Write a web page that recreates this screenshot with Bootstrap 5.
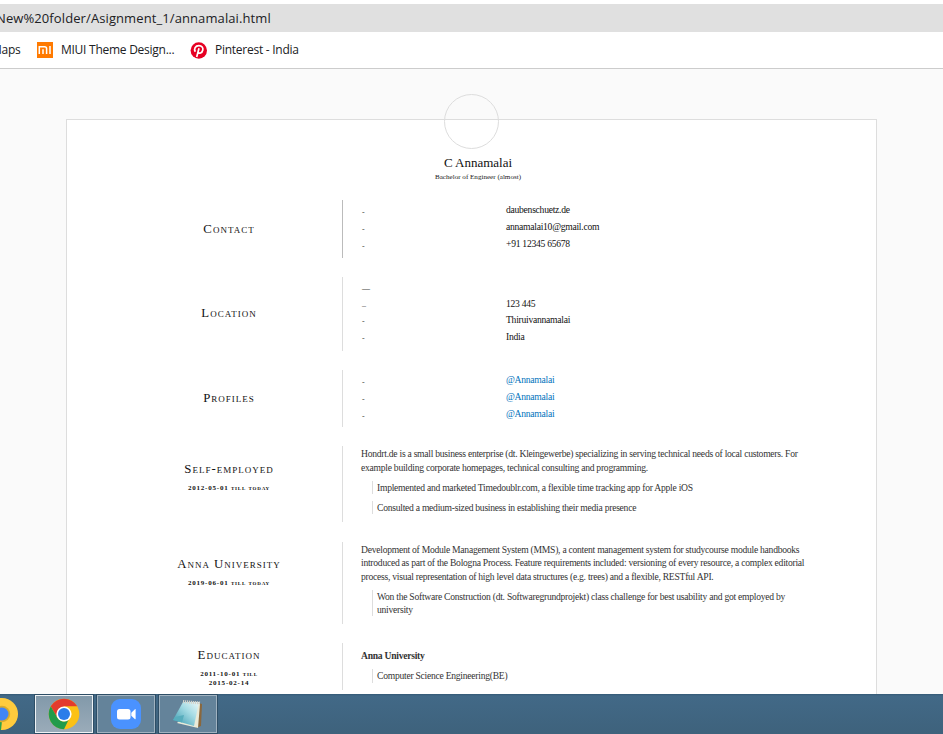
<!DOCTYPE html>
<html lang="en">
<head>
<meta charset="utf-8">
<meta name="viewport" content="width=device-width, initial-scale=1">
<title>C Annamalai</title>
<link href="https://cdn.jsdelivr.net/npm/bootstrap@5.3.0/dist/css/bootstrap.min.css" rel="stylesheet">
<style>
  body { width: 943px; height: 734px; background: #fafafa; font-family: "Liberation Serif", serif; color: #333; }
  .chrome-ui { font-family: "Open Sans", "Noto Sans", sans-serif; color: #202124; line-height: 20px; white-space: nowrap; }
  .address { height: 28px; margin-top: 4px; background: #e0e0e0; font-size: 13px; }
  .bookmarks { height: 37px; background: #fff; border-bottom: 1px solid #ccc; font-size: 12px; }
  .address span { margin-left: -4px; letter-spacing: .1px; }
  .bm-maps { width: 36px; }
  .bm-maps span { margin-left: -9px; }
  .bm-miui { width: 154px; }
  .bookmarks span { letter-spacing: -.26px; }
  .browser { height: 694px; }
  .page-area { background: #fafafa; }
  .sheet { width: 811px; height: 600px; margin: 50px 0 0 66px; background: #fff; border: 1px solid #ddd; }
  .portrait { width: 55px; height: 55px; border: 1px solid #ddd; margin: -26px 0 0 377px; }
  .person { font-size: 13px; line-height: 16px; color: #111; padding-left: 13px; margin-top: 6px; }
  .degree { font-size: 7.1px; line-height: 10px; color: #222; padding-left: 13px; margin-top: 1px; margin-bottom: 18px; }
  .entry { margin-bottom: 19px; padding-left: 49px; }
  .label-col { width: 226px; color: #111; padding-bottom: 1px; }
  .heading { font-size: 12.8px; line-height: 18px; font-variant: small-caps; letter-spacing: 1px; }
  .period { font-size: 7px; line-height: 9px; font-weight: bold; font-variant: small-caps; letter-spacing: .78px; }
  .detail { border-left: 1px solid #ddd; padding: 1px 0 0 18px; font-size: 9.6px; line-height: 13.6px; white-space: nowrap; letter-spacing: -.256px; }
  .pairs { line-height: 17px; color: #111; letter-spacing: -.26px; }
  .pairs > div { height: 17px; }
  .pairs .key { width: 145px; padding-left: 1px; font-size: 8px; padding-top: 3px; color: #444; }
  .point { margin: 6.4px 0 0 11px; padding-left: 4px; border-left: 1px solid #ddd; }
  .profile-link { color: #0072bc; }
  .h-contact { height: 58px; }
  .h-contact .detail { border-color: #bbb; }
  .h-location { height: 74px; }
  .h-location .label-col { padding-bottom: 3px; }
  .h-location .pairs { line-height: 16.7px; padding-top: 2px; }
  .h-location .pairs > div { height: 16.7px; }
  .h-location .key { padding-top: 2px; }
  .h-profiles { height: 57px; }
  .h-self { height: 76px; margin-bottom: 20px; }
  .h-self .label-col { padding-top: 14px; }
  .h-self .period { margin-top: 6px; }
  .h-univ { height: 82px; }
  .h-univ .detail { line-height: 13.4px; }
  .h-univ .label-col { padding-top: 13px; }
  .h-univ .period { margin-top: 6px; }
  .h-edu { height: 47px; }
  .h-edu .label-col { padding-top: 3px; }
  .h-edu .period { margin-top: 6px; }
  .h-edu .detail { padding-top: 6px; }
  .taskbar { height: 40px; background: linear-gradient(#345a76 0, #426987 2px, #3e627c 100%); }
  .task { width: 58px; height: 38px; margin-top: 1px; margin-left: 4px; border: 1px solid #a0b2c0; outline: 1px solid #2e4e66; background: #64839a; }
  .task-active { margin-left: 1px; border-color: #eef2f5; background: linear-gradient(#8299aa, #9aabb9); }
</style>
<script src="https://cdn.jsdelivr.net/npm/bootstrap@5.3.0/dist/js/bootstrap.bundle.min.js"></script>
</head>
<body class="overflow-hidden">
<div class="browser overflow-hidden d-flex flex-column bg-white">
  <div class="chrome-ui flex-shrink-0">
    <div class="address d-flex align-items-center"><span>New%20folder/Asignment_1/annamalai.html</span></div>
    <div class="bookmarks d-flex align-items-center">
      <div class="bm-maps"><span>Maps</span></div>
      <div class="bm-miui d-flex align-items-center">
        <svg class="me-2" width="17" height="16" viewBox="-1 0 17 16"><path fill="#ff7a00" d="M0 0h16v16H0z"/><path fill="none" stroke="#fff" stroke-width="1.5" d="M2.3 12V4.8h5.3q2 0 2 2V12M6 12V7.2M13 4v8"/></svg>
        <span>MIUI Theme Design...</span>
      </div>
      <div class="d-flex align-items-center">
        <svg class="me-2" width="17" height="17" viewBox="0 0 17 17"><circle cx="8.8" cy="8.5" r="8.2" fill="#e60023"/><path fill="none" stroke="#fff" stroke-width="1.7" d="M5.3 9.8C3.6 7 5.3 3.7 8.9 3.7c3 0 4.4 2 3.9 4.3-.7 3.4-3.7 4-4.8 2.2M9 6.2 6.7 15"/></svg>
        <span>Pinterest - India</span>
      </div>
    </div>
  </div>
  <main class="page-area flex-grow-1 overflow-hidden">
    <div class="sheet">
      <div class="portrait rounded-circle"></div>
      <div class="person text-center">C Annamalai</div>
      <div class="degree text-center">Bachelor of Engineer (almost)</div>

      <section class="entry d-flex h-contact">
        <div class="label-col d-flex flex-column justify-content-center text-center"><div class="heading">Contact</div></div>
        <div class="detail pairs">
          <div class="d-flex"><div class="key">-</div><div>daubenschuetz.de</div></div>
          <div class="d-flex"><div class="key">-</div><div>annamalai10@gmail.com</div></div>
          <div class="d-flex"><div class="key">-</div><div>+91 12345 65678</div></div>
        </div>
      </section>
      <section class="entry d-flex h-location">
        <div class="label-col d-flex flex-column justify-content-center text-center"><div class="heading">Location</div></div>
        <div class="detail pairs">
          <div class="d-flex"><div class="key">—</div><div>&nbsp;</div></div>
          <div class="d-flex"><div class="key">–</div><div>123 445</div></div>
          <div class="d-flex"><div class="key">-</div><div>Thiruivannamalai</div></div>
          <div class="d-flex"><div class="key">-</div><div>India</div></div>
        </div>
      </section>
      <section class="entry d-flex h-profiles">
        <div class="label-col d-flex flex-column justify-content-center text-center"><div class="heading">Profiles</div></div>
        <div class="detail pairs">
          <div class="d-flex"><div class="key">-</div><div class="profile-link">@Annamalai</div></div>
          <div class="d-flex"><div class="key">-</div><div class="profile-link">@Annamalai</div></div>
          <div class="d-flex"><div class="key">-</div><div class="profile-link">@Annamalai</div></div>
        </div>
      </section>
      <section class="entry d-flex h-self">
        <div class="label-col text-center"><div class="heading">Self-employed</div><div class="period">2012-05-01 till today</div></div>
        <div class="detail">
          <div>Hondrt.de is a small business enterprise (dt. Kleingewerbe) specializing in serving technical needs of local customers. For<br>example building corporate homepages, technical consulting and programming.</div>
          <div class="point">Implemented and marketed Timedoublr.com, a flexible time tracking app for Apple iOS</div>
          <div class="point">Consulted a medium-sized business in establishing their media presence</div>
        </div>
      </section>
      <section class="entry d-flex h-univ">
        <div class="label-col text-center"><div class="heading">Anna University</div><div class="period">2019-06-01 till today</div></div>
        <div class="detail">
          <div>Development of Module Management System (MMS), a content management system for studycourse module handbooks<br>introduced as part of the Bologna Process. Feature requirements included: versioning of every resource, a complex editorial<br>process, visual representation of high level data structures (e.g. trees) and a flexible, RESTful API.</div>
          <div class="point">Won the Software Construction (dt. Softwaregrundprojekt) class challenge for best usability and got employed by<br>university</div>
        </div>
      </section>
      <section class="entry d-flex h-edu">
        <div class="label-col text-center"><div class="heading">Education</div><div class="period">2011-10-01 till<br>2015-02-14</div></div>
        <div class="detail">
          <div class="fw-bold">Anna University</div>
          <div class="point">Computer Science Engineering(BE)</div>
        </div>
      </section>
    </div>
  </main>
</div>
<footer class="taskbar d-flex">
  <svg width="34" height="40" viewBox="0 0 34 40"><circle cx="2" cy="20" r="16" fill="#ffcb3d"/><path fill="#2ca24c" d="M0 27h2l-1 9H0z"/><circle cx="2" cy="20" r="8.2" fill="#d9ab2c"/><circle cx="2" cy="20" r="6.5" fill="#4285f4"/></svg>
  <div class="task task-active d-flex justify-content-center align-items-center">
    <svg width="32" height="32" viewBox="-16 -16 32 32"><circle r="15.3" fill="#fbc116"/><path fill="#e33b2e" d="M-13.25-7.65A15.3 15.3 0 0 1 13.25-7.65H0L-6.6 3.8z"/><path fill="#229b4b" d="M-13.25-7.65-6.6 3.8A7.6 7.6 0 0 0 4.5 6.1L0 15.3A15.3 15.3 0 0 1-13.25-7.65z"/><circle r="7.6" fill="#fff"/><circle r="6" fill="#2b7de9"/></svg>
  </div>
  <div class="task d-flex justify-content-center align-items-center">
    <svg width="30" height="30" viewBox="0 0 30 30"><rect width="30" height="30" rx="9" fill="#4a92ff"/><rect x="6" y="10" width="13.5" height="10.5" rx="2.5" fill="#fff"/><path fill="#fff" d="m20.3 13.7 3.7-3.5q.6-.3.6.4v9.2q0 .7-.6.4l-3.7-3.5z"/></svg>
  </div>
  <div class="task d-flex justify-content-center align-items-center">
    <svg width="34" height="32" viewBox="0 0 34 32"><defs><linearGradient id="pad" x1="0" y1="1" x2="1" y2="0"><stop stop-color="#2f94ab"/><stop offset=".6" stop-color="#a5dbe4"/><stop offset="1" stop-color="#edf9fa"/></linearGradient></defs><path fill="#8a673c" d="m27 5 4 1-1 22-5 2z"/><path fill="#e9ead8" d="m26 5 3 1-2 24-21-5z"/><path fill="url(#pad)" d="M12 4h16L23 28 2 22z"/><path fill="#57adbd" d="m2 22 9 2.4L13 17 4 19z"/><path stroke="#d3d3cc" stroke-width="3" stroke-dasharray="1.2 .8" d="M12 3.5 29 5"/></svg>
  </div>
</footer>
</body>
</html>
